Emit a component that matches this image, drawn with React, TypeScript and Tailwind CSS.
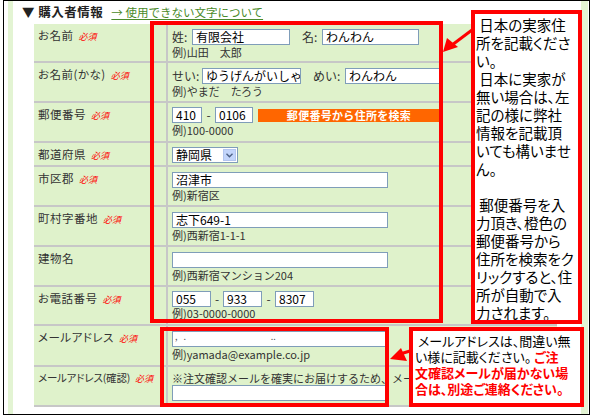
import type { ReactNode } from 'react';

const FONT = "font-['Noto_Sans_CJK_JP','Noto_Sans',sans-serif]";

function Req() {
  return <span className="ml-[5px] text-[9px] text-[#ff0000] italic tracking-normal">必須</span>;
}

function Row({
  label,
  req = true,
  h,
  pt = 'pt-[5px]',
  tight = false,
  children,
}: {
  label: string;
  req?: boolean;
  h: string;
  pt?: string;
  tight?: boolean;
  children: ReactNode;
}) {
  return (
    <div className={`flex border-b-2 border-[#c7c7c7] ${h}`}>
      <div
        className={`w-[134px] shrink-0 border-r-2 border-[#c7c7c7] pl-[4px] pt-[3px] leading-[16px] text-[#333] whitespace-nowrap overflow-hidden [font-feature-settings:'palt'] ${
          tight ? 'text-[10.5px] tracking-[-0.2px]' : 'text-[11.5px] tracking-[0.5px]'
        }`}
      >
        {label}
        {req && <Req />}
      </div>
      <div className={`flex-1 pl-[4px] ${pt}`}>{children}</div>
    </div>
  );
}

function Field({ w, value = '' }: { w: string; value?: string }) {
  return (
    <div
      className={`${w} h-[16px] shrink-0 border border-[#7f9db9] bg-white px-[3px] text-[12px] leading-[14px] text-black whitespace-nowrap overflow-hidden`}
    >
      {value}
    </div>
  );
}

function Example({ children, up = false }: { children: ReactNode; up?: boolean }) {
  return (
    <div className={`text-[11px] leading-[14px] text-[#333] ${up ? 'mt-[-1px]' : ''}`}>{children}</div>
  );
}

const callout1 = [
  ' 日本の実家住',
  '所を記載くださ',
  'い。',
  ' 日本に実家が',
  '無い場合は、左',
  '記の様に弊社',
  '情報を記載頂',
  'いても構いませ',
  'ん。',
  '',
  ' 郵便番号を入',
  '力頂き、橙色の',
  '郵便番号から',
  '住所を検索をク',
  'リックすると、住',
  '所が自動で入',
  '力されます。',
];

export default function App() {
  return (
    <div className={`relative w-[592px] h-[419px] bg-white overflow-hidden ${FONT}`}>
      <div className="ml-[3px] w-[587px] h-[415px] border border-black flex">
        <div className="w-[4px] shrink-0" />
        <div className="w-[5px] shrink-0 bg-[#e3f4d3]" />
        <div className="flex-1 flex flex-col">
          {/* Heading */}
          <div className="h-[23px] flex items-center pl-[9px] gap-[8px]">
            <span className="text-[12.5px] font-bold text-[#222] tracking-[0.5px]">▼ 購入者情報</span>
            <span className="text-[11.5px] text-[#4a8a2a] underline underline-offset-2">→ 使用できない文字について</span>
          </div>

          {/* Form table */}
          <div className="ml-[21px] w-[523px] bg-[#dff2cb]">
            <Row label="お名前" h="h-[39px]">
              <div className="flex items-center h-[16px] text-[12px] leading-[16px] text-[#333]">
                <span className="w-[20px]">姓:</span>
                <Field w="w-[98px]" value="有限会社" />
                <span className="ml-[12px] w-[20px]">名:</span>
                <Field w="w-[97px]" value="わんわん" />
              </div>
              <Example>例)山田　太郎</Example>
            </Row>
            <Row label="お名前(かな)" h="h-[40px]">
              <div className="flex items-center h-[16px] text-[12px] leading-[16px] text-[#333]">
                <span className="w-[30px]">せい:</span>
                <Field w="w-[99px]" value="ゆうげんがいしゃ" />
                <span className="ml-[12px] w-[32px]">めい:</span>
                <Field w="w-[95px]" value="わんわん" />
              </div>
              <Example>例)やまだ　たろう</Example>
            </Row>
            <Row label="郵便番号" h="h-[40px]" pt="pt-[4px]">
              <div className="flex items-center h-[16px] text-[12px] leading-[16px] text-[#333]">
                <Field w="w-[30px]" value="410" />
                <span className="w-[13px] text-center">-</span>
                <Field w="w-[38px]" value="0106" />
                <div className="ml-[5px] w-[182px] h-[13px] bg-[#ff6600] text-white text-[11px] font-bold leading-[13px] text-center tracking-[0.3px]">
                  郵便番号から住所を検索
                </div>
              </div>
              <Example>例)100-0000</Example>
            </Row>
            <Row label="都道府県" h="h-[24px]" pt="pt-[4px]">
              <div className="w-[66px] h-[16px] border border-[#7f9db9] bg-white flex items-center">
                <span className="flex-1 pl-[3px] text-[12px] leading-[14px]">静岡県</span>
                <span className="w-[13px] h-[12px] mr-[1px] bg-[#c3d5fb] border border-[#b3c6f0] flex items-center justify-center">
                  <svg width="7" height="5" viewBox="0 0 7 5">
                    <path d="M0.5 0.8 L3.5 3.8 L6.5 0.8" fill="none" stroke="#4d6185" strokeWidth="1.4" />
                  </svg>
                </span>
              </div>
            </Row>
            <Row label="市区郡" h="h-[40px]">
              <Field w="w-[216px]" value="沼津市" />
              <Example>例)新宿区</Example>
            </Row>
            <Row label="町村字番地" h="h-[40px]">
              <Field w="w-[216px]" value="志下649-1" />
              <Example>例)西新宿1-1-1</Example>
            </Row>
            <Row label="建物名" req={false} h="h-[40px]">
              <Field w="w-[216px]" />
              <Example>例)西新宿マンション204</Example>
            </Row>
            <Row label="お電話番号" h="h-[39px]" pt="pt-[4px]">
              <div className="flex items-center h-[16px] text-[12px] leading-[16px] text-[#333]">
                <Field w="w-[39px]" value="055" />
                <span className="w-[12px] text-center">-</span>
                <Field w="w-[39px]" value="933" />
                <span className="w-[13px] text-center">-</span>
                <Field w="w-[39px]" value="8307" />
              </div>
              <Example up>例)03-0000-0000</Example>
            </Row>
            <Row label="メールアドレス" h="h-[41px]">
              <div className="w-[214px] h-[16px] border border-[#7f9db9] bg-white text-[9px] leading-[10px] text-[#555] whitespace-pre overflow-hidden">
                {' ,   .                                          ..'}
              </div>
              <Example>例)yamada@example.co.jp</Example>
            </Row>
            <Row label="メールアドレス(確認)" h="h-[40px]" pt="pt-[4px]" tight>
              <div className="text-[11px] leading-[14px] text-[#333] whitespace-nowrap overflow-hidden w-[240px]">
                ※注文確認メールを確実にお届けするため、メールアドレス
              </div>
              <Field w="w-[214px]" />
            </Row>
          </div>
        </div>
        <div className="w-[7px] shrink-0 bg-[#e3f4d3]" />
        <div className="w-[1px] shrink-0" />
      </div>

      {/* Red highlight boxes */}
      <div className="absolute left-[150px] top-[21px] w-[293px] h-[302px] border-4 border-[#ff0000]" />
      <div className="absolute left-[160px] top-[327px] w-[229px] h-[80px] border-4 border-[#ff0000]" />

      {/* Callout 1 */}
      <div className="absolute left-[471px] top-[10px] w-[111px] h-[314px] border-4 border-[#ff0000] bg-white pl-[1px] pt-[2px] overflow-hidden">
        {callout1.map((line, i) => (
          <div key={i} className="h-[18px] text-[14.5px] leading-[18px] text-black whitespace-pre [font-feature-settings:'palt']">
            {line}
          </div>
        ))}
      </div>

      {/* Callout 2 */}
      <div className="absolute left-[409px] top-[327px] w-[175px] h-[80px] border-4 border-[#ff0000] bg-white pl-[2px] pt-[2px] overflow-hidden text-[13px] leading-[16px] text-black whitespace-pre [font-feature-settings:'palt']">
        <div>{' メールアドレスは、間違い無'}</div>
        <div>
          {'い様に記載ください。 '}
          <span className="font-bold text-[#ff0000]">ご注</span>
        </div>
        <div className="font-bold text-[#ff0000]">文確認メールが届かない場</div>
        <div className="font-bold text-[#ff0000]">合は、別途ご連絡ください。</div>
      </div>

      {/* Arrows */}
      <svg className="absolute left-0 top-0" width="592" height="419" viewBox="0 0 592 419">
        <line x1="472" y1="30" x2="452" y2="45" stroke="#ff0000" strokeWidth="3" />
        <polygon points="443,52 447,38 458,47" fill="#ff0000" />
        <line x1="410" y1="351" x2="400" y2="354" stroke="#ff0000" strokeWidth="3" />
        <polygon points="390,359 401,348 407,361" fill="#ff0000" />
      </svg>
    </div>
  );
}
